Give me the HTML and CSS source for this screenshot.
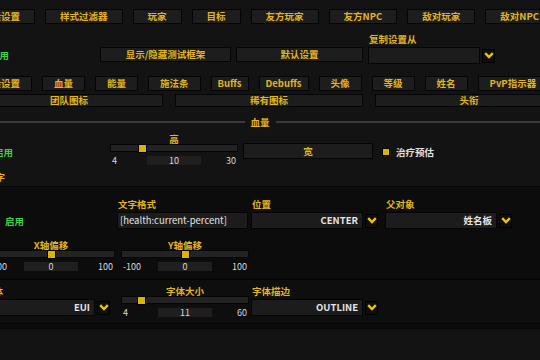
FILE: index.html
```html
<!DOCTYPE html>
<html lang="zh-CN">
<head>
  <meta charset="UTF-8">
  <meta name="viewport" content="width=device-width, initial-scale=1.0">
  <title>单位框体 - 目标</title>
  <link rel="stylesheet" href="styles.css">
</head>
<body>
  <div class="page">
    <nav class="tab-row top-tabs">
      <button class="tab">一般设置</button>
      <button class="tab">样式过滤器</button>
      <button class="tab">玩家</button>
      <button class="tab">目标</button>
      <button class="tab">友方玩家</button>
      <button class="tab">友方NPC</button>
      <button class="tab">敌对玩家</button>
      <button class="tab">敌对NPC</button>
    </nav>

    <div class="action-row">
      <label class="check"><span class="box"></span>启用</label>
      <button class="btn test-btn">显示/隐藏测试框架</button>
      <button class="btn default-btn">默认设置</button>
      <div class="field copy-field">
        <span class="field-label">复制设置从</span>
        <div class="select">
          <div class="select-box"></div>
          <span class="arrow"><svg width="10" height="7" viewBox="0 0 10 7"><polyline points="1.2,1.2 5,5 8.8,1.2" fill="none" stroke="#f2c300" stroke-width="2.4"/></svg></span>
        </div>
      </div>
    </div>

    <nav class="tab-row sub-tabs">
      <button class="tab">一般设置</button>
      <button class="tab">血量</button>
      <button class="tab">能量</button>
      <button class="tab">施法条</button>
      <button class="tab tab-latin">Buffs</button>
      <button class="tab tab-latin">Debuffs</button>
      <button class="tab">头像</button>
      <button class="tab">等级</button>
      <button class="tab">姓名</button>
      <button class="tab">PvP指示器</button>
    </nav>
    <nav class="wide-tabs">
      <button class="tab">团队图标</button>
      <button class="tab">稀有图标</button>
      <button class="tab">头衔</button>
    </nav>

    <div class="heading"><span>血量</span></div>

    <section class="grid health">
      <label class="check"><span class="box"></span>启用</label>
      <div class="slider">
        <div class="slider-label">高</div>
        <div class="track"><span class="thumb" style="--pos:0.23"></span></div>
        <div class="slider-values"><span>4</span><span class="value">10</span><span>30</span></div>
      </div>
      <button class="btn width-btn">宽</button>
      <label class="check plain"><span class="box on"></span>治疗预估</label>
    </section>

    <div class="group-title">文字</div>
    <section class="group">
      <div class="grid text-grid">
        <label class="check"><span class="box"></span>启用</label>
        <div class="field">
          <span class="field-label">文字格式</span>
          <div class="editbox">[health:current-percent]</div>
        </div>
        <div class="field">
          <span class="field-label">位置</span>
          <div class="select">
            <div class="select-box">CENTER</div>
            <span class="arrow"><svg width="10" height="7" viewBox="0 0 10 7"><polyline points="1.2,1.2 5,5 8.8,1.2" fill="none" stroke="#f2c300" stroke-width="2.4"/></svg></span>
          </div>
        </div>
        <div class="field">
          <span class="field-label">父对象</span>
          <div class="select">
            <div class="select-box">姓名板</div>
            <span class="arrow"><svg width="10" height="7" viewBox="0 0 10 7"><polyline points="1.2,1.2 5,5 8.8,1.2" fill="none" stroke="#f2c300" stroke-width="2.4"/></svg></span>
          </div>
        </div>

        <div class="slider">
          <div class="slider-label">X轴偏移</div>
          <div class="track"><span class="thumb" style="--pos:0.5"></span></div>
          <div class="slider-values"><span>-100</span><span class="value">0</span><span>100</span></div>
        </div>
        <div class="slider">
          <div class="slider-label">Y轴偏移</div>
          <div class="track"><span class="thumb" style="--pos:0.5"></span></div>
          <div class="slider-values"><span>-100</span><span class="value">0</span><span>100</span></div>
        </div>
      </div>

      <div class="grid subgroup">
        <div class="field">
          <span class="field-label">字体</span>
          <div class="select">
            <div class="select-box">EUI</div>
            <span class="arrow"><svg width="10" height="7" viewBox="0 0 10 7"><polyline points="1.2,1.2 5,5 8.8,1.2" fill="none" stroke="#f2c300" stroke-width="2.4"/></svg></span>
          </div>
        </div>
        <div class="slider">
          <div class="slider-label">字体大小</div>
          <div class="track"><span class="thumb" style="--pos:0.125"></span></div>
          <div class="slider-values"><span>4</span><span class="value">11</span><span>60</span></div>
        </div>
        <div class="field">
          <span class="field-label">字体描边</span>
          <div class="select">
            <div class="select-box">OUTLINE</div>
            <span class="arrow"><svg width="10" height="7" viewBox="0 0 10 7"><polyline points="1.2,1.2 5,5 8.8,1.2" fill="none" stroke="#f2c300" stroke-width="2.4"/></svg></span>
          </div>
        </div>
      </div>
    </section>
  </div>
</body>
</html>
```

FILE: styles.css
```css
html, body {
  margin: 0;
  height: 100%;
}
body {
  background: #131313;
  overflow: hidden;
  font-family: "Noto Sans CJK SC", "Noto Sans", sans-serif;
  font-size: 9.5px;
  font-weight: bold;
  color: #e2b41e;
}
.page {
  margin-left: -40px;
  width: 640px;
  padding-top: 9px;
}
button {
  font: inherit;
  color: inherit;
  cursor: pointer;
  margin: 0;
}
.tab, .btn {
  box-sizing: border-box;
  height: 15px;
  line-height: 13px;
  padding: 0 14px;
  background: #1d1d1d;
  border: 1px solid #050505;
  white-space: nowrap;
}

.tab-row {
  display: flex;
  gap: 10px;
}
.top-tabs {
  margin-left: 7px;
}
.sub-tabs {
  margin: 12px 0 0 10px;
}
.sub-tabs .tab {
  padding: 0 11px;
}
.sub-tabs .tab-latin {
  padding: 0 6px;
}
.wide-tabs {
  display: flex;
  gap: 12px;
  margin: 3px 0 0 15px;
}
.wide-tabs .tab {
  width: 188px;
  height: 13px;
  line-height: 11px;
  padding: 0;
}

.action-row {
  display: flex;
  align-items: flex-end;
  margin: 10px 0 0 8px;
}
.action-row .check {
  width: 132px;
  height: 15px;
  margin-bottom: 2px;
}
.test-btn {
  width: 131px;
  padding: 0;
  margin-bottom: 2px;
}
.default-btn {
  width: 127px;
  padding: 0;
  margin: 0 0 2px 5px;
}
.copy-field {
  margin-left: 5px;
}

.field-label {
  display: block;
  height: 11px;
  line-height: 11px;
  margin-bottom: 2px;
  padding-left: 1px;
  white-space: nowrap;
}
.select {
  display: flex;
  align-items: center;
  gap: 2px;
}
.select-box, .editbox {
  box-sizing: border-box;
  height: 17px;
  line-height: 15px;
  background: #1c1c1c;
  border: 1px solid #050505;
  color: #e4e4e4;
  white-space: nowrap;
}
.select-box {
  width: 112px;
  text-align: right;
  padding-right: 4px;
}
.editbox {
  width: 131px;
  padding-left: 2px;
  font-weight: normal;
}
.arrow {
  box-sizing: border-box;
  width: 13px;
  height: 14px;
  background: #0e0e0e;
  border: 1px solid #000;
  display: flex;
  align-items: center;
  justify-content: center;
}

.heading {
  display: flex;
  align-items: center;
  gap: 6px;
  width: 576px;
  height: 12px;
  line-height: 12px;
  margin: 9px 0 0 12px;
}
.heading::before, .heading::after {
  content: "";
  flex: 1;
  height: 2px;
  background: #3b3b3b;
}

.grid {
  display: grid;
  grid-template-columns: repeat(4, 134px);
}
.health {
  margin: 6px 0 0 12px;
  align-items: start;
}
.health .check {
  height: 12px;
  margin-top: 12px;
}
.width-btn {
  width: 130px;
  height: 16px;
  padding: 0;
  margin: 9px 0 0 3px;
}

.check {
  display: flex;
  align-items: center;
  gap: 6px;
  color: #3fcf4a;
  white-space: nowrap;
}
.check .box {
  box-sizing: border-box;
  width: 8px;
  height: 8px;
  margin-left: 8px;
  border: 1px solid #000;
  background: #1c1c1c;
}
.check .box.on {
  background: #d9b400;
}
.check.plain {
  color: #e0e0e0;
}

.slider {
  padding: 0 2px 0 4px;
}
.slider-label {
  height: 10px;
  line-height: 10px;
  text-align: center;
  white-space: nowrap;
}
.track {
  position: relative;
  box-sizing: border-box;
  height: 8px;
  background: #232323;
  border: 1px solid #050505;
}
.thumb {
  position: absolute;
  top: -1px;
  left: calc(var(--pos) * (100% - 9px));
  box-sizing: border-box;
  width: 9px;
  height: 9px;
  background: #d9b400;
  border: 1px solid #000;
}
.slider-values {
  display: grid;
  grid-template-columns: 1fr 54px 1fr;
  margin-top: 4px;
  padding: 0 2px;
  height: 9px;
  line-height: 9px;
  font-size: 9px;
  font-weight: normal;
  color: #d8d8d8;
}
.slider-values span:last-child {
  text-align: right;
}
.slider-values .value {
  background: #1f1f1f;
  text-align: center;
}

.group-title {
  height: 10px;
  line-height: 10px;
  margin: 7px 0 0 26px;
}
.group {
  box-sizing: border-box;
  width: 600px;
  margin: 4px 0 0 12px;
  padding: 12px 0 4px 10px;
  background: #0c0c0c;
  border: 1px solid #060606;
}
.text-grid {
  row-gap: 11px;
}
.text-grid .check {
  align-self: end;
  height: 17px;
}
.subgroup {
  margin-top: 8px;
  padding: 6px 0;
  background: #0e0e0e;
  border-top: 1px solid #050505;
  border-bottom: 1px solid #050505;
}
```
